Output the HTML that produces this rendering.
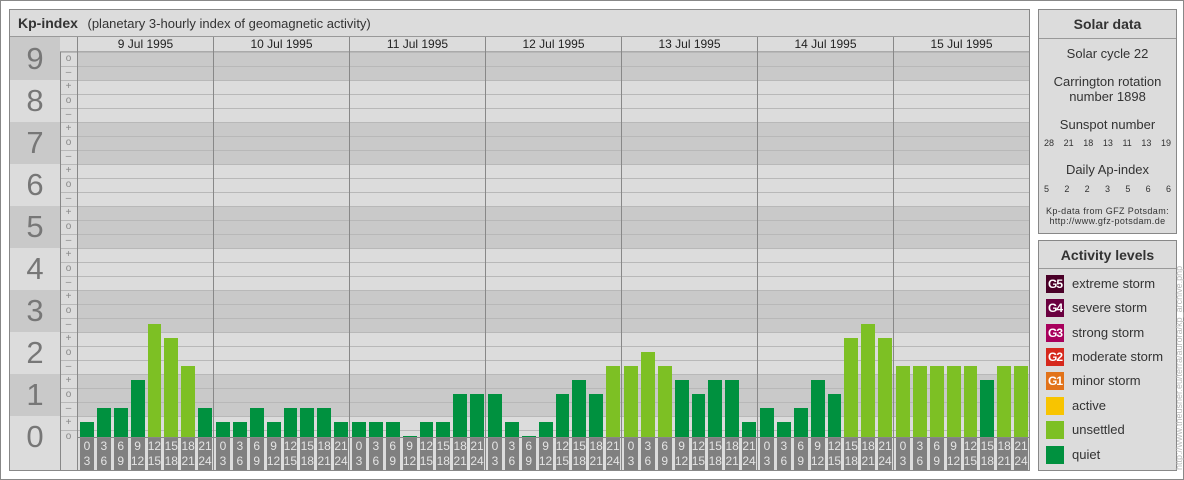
<!DOCTYPE html>
<html><head><meta charset="utf-8"><style>
*{margin:0;padding:0;box-sizing:border-box}
body{width:1184px;height:480px;background:#fff;font-family:"Liberation Sans",sans-serif;position:relative;overflow:hidden}
.abs{position:absolute}
#frame{left:0;top:0;width:1184px;height:480px;border:1px solid #888}
#main{left:9px;top:9px;width:1021px;height:462px;border:1px solid #888;background:#dcdcdc}
#title{left:10px;top:10px;width:1019px;height:27px;border-bottom:1px solid #999;font-size:13px;color:#333;line-height:26px;padding-left:8px}
#title b{font-size:14px;color:#333;margin-right:6px}
.band{position:absolute;background:#c9c9c9}
.kp{position:absolute;left:10px;width:50px;font-size:31px;color:#777;text-align:center}
.tk{position:absolute;left:60px;width:17px;height:14px;font-size:10px;line-height:14px;color:#888;text-align:center}
#grid{left:60px;top:52px;width:969px;height:385px;background:repeating-linear-gradient(to bottom,#b8b8b8 0,#b8b8b8 1px,transparent 1px,transparent 14px)}
.day{position:absolute;top:37px;width:136px;height:433px;border-left:1px solid #888}
.dt{height:15px;font-size:12px;line-height:15px;text-align:center;color:#222}
.bars{position:absolute;left:1px;top:0;height:400px;width:136px;display:flex;align-items:flex-end;padding-left:1px}
.bars i{display:block;width:14px;margin-right:3px;background:#00913f}
.bars i.u{background:#7dc024}
.ax{position:absolute;left:1px;top:401px;width:136px;display:flex;padding-left:1px}
.ax span{display:block;width:14px;height:32px;margin-right:3px;background:#808080;color:#e4e4e4;font-size:12px;line-height:15px;text-align:center;padding-top:1px}
.box{position:absolute;left:1038px;width:139px;border:1px solid #888;background:#dcdcdc}
.hd{height:29px;border-bottom:1px solid #999;font-weight:bold;font-size:14px;color:#333;text-align:center;line-height:29px}
.sd{text-align:center;color:#333;font-size:13px}
.nums{display:flex;justify-content:space-between;padding:0 5px;font-size:9px;color:#333}
.lg{position:absolute;left:7px;height:18px;font-size:13px;color:#333;line-height:18px}
.lg i{position:absolute;left:0;top:0;width:18px;height:18px;font-style:normal;color:#fff;font-size:12px;font-weight:bold;text-align:center;letter-spacing:-1px}
.lg span{position:absolute;left:26px;white-space:nowrap}
</style></head><body>
<div id="frame" class="abs"></div>
<div id="main" class="abs"></div>
<div id="title" class="abs"><b>Kp-index</b> (planetary 3-hourly index of geomagnetic activity)</div>
<div class="band" style="left:10px;top:37px;width:50px;height:43px"></div>
<div class="band" style="left:10px;top:122px;width:50px;height:42px"></div>
<div class="band" style="left:10px;top:206px;width:50px;height:42px"></div>
<div class="band" style="left:10px;top:290px;width:50px;height:42px"></div>
<div class="band" style="left:10px;top:374px;width:50px;height:42px"></div>
<div class="band" style="left:77px;top:52px;width:952px;height:28px"></div>
<div class="band" style="left:77px;top:122px;width:952px;height:42px"></div>
<div class="band" style="left:77px;top:206px;width:952px;height:42px"></div>
<div class="band" style="left:77px;top:290px;width:952px;height:42px"></div>
<div class="band" style="left:77px;top:374px;width:952px;height:42px"></div>
<div id="grid" class="abs"></div>
<div class="abs" style="left:60px;top:37px;width:1px;height:433px;background:#888"></div>
<div class="abs" style="left:77px;top:37px;width:1px;height:433px;background:#888"></div>
<div class="abs" style="left:60px;top:37px;width:969px;height:15px;background:#dcdcdc;border-bottom:1px solid #aaa"></div>
<div class="abs" style="left:77px;top:437px;width:952px;height:1px;background:#888"></div>
<div class="kp" style="top:41px">9</div>
<div class="kp" style="top:83px">8</div>
<div class="kp" style="top:125px">7</div>
<div class="kp" style="top:167px">6</div>
<div class="kp" style="top:209px">5</div>
<div class="kp" style="top:251px">4</div>
<div class="kp" style="top:293px">3</div>
<div class="kp" style="top:335px">2</div>
<div class="kp" style="top:377px">1</div>
<div class="kp" style="top:419px">0</div>
<div class="tk" style="top:52px">o</div><div class="tk" style="top:66px">–</div>
<div class="tk" style="top:80px">+</div><div class="tk" style="top:94px">o</div><div class="tk" style="top:108px">–</div>
<div class="tk" style="top:122px">+</div><div class="tk" style="top:136px">o</div><div class="tk" style="top:150px">–</div>
<div class="tk" style="top:164px">+</div><div class="tk" style="top:178px">o</div><div class="tk" style="top:192px">–</div>
<div class="tk" style="top:206px">+</div><div class="tk" style="top:220px">o</div><div class="tk" style="top:234px">–</div>
<div class="tk" style="top:248px">+</div><div class="tk" style="top:262px">o</div><div class="tk" style="top:276px">–</div>
<div class="tk" style="top:290px">+</div><div class="tk" style="top:304px">o</div><div class="tk" style="top:318px">–</div>
<div class="tk" style="top:332px">+</div><div class="tk" style="top:346px">o</div><div class="tk" style="top:360px">–</div>
<div class="tk" style="top:374px">+</div><div class="tk" style="top:388px">o</div><div class="tk" style="top:402px">–</div>
<div class="tk" style="top:416px">+</div><div class="tk" style="top:430px">o</div>

<div class="day" style="left:77px"><div class="dt">9 Jul 1995</div>
<div class="bars"><i style="height:15px"></i><i style="height:29px"></i><i style="height:29px"></i><i style="height:57px"></i><i class="u" style="height:113px"></i><i class="u" style="height:99px"></i><i class="u" style="height:71px"></i><i style="height:29px"></i></div>
<div class="ax"><span>0<br>3</span><span>3<br>6</span><span>6<br>9</span><span>9<br>12</span><span>12<br>15</span><span>15<br>18</span><span>18<br>21</span><span>21<br>24</span></div></div>

<div class="day" style="left:213px"><div class="dt">10 Jul 1995</div>
<div class="bars"><i style="height:15px"></i><i style="height:15px"></i><i style="height:29px"></i><i style="height:15px"></i><i style="height:29px"></i><i style="height:29px"></i><i style="height:29px"></i><i style="height:15px"></i></div>
<div class="ax"><span>0<br>3</span><span>3<br>6</span><span>6<br>9</span><span>9<br>12</span><span>12<br>15</span><span>15<br>18</span><span>18<br>21</span><span>21<br>24</span></div></div>

<div class="day" style="left:349px"><div class="dt">11 Jul 1995</div>
<div class="bars"><i style="height:15px"></i><i style="height:15px"></i><i style="height:15px"></i><i style="height:1px"></i><i style="height:15px"></i><i style="height:15px"></i><i style="height:43px"></i><i style="height:43px"></i></div>
<div class="ax"><span>0<br>3</span><span>3<br>6</span><span>6<br>9</span><span>9<br>12</span><span>12<br>15</span><span>15<br>18</span><span>18<br>21</span><span>21<br>24</span></div></div>

<div class="day" style="left:485px"><div class="dt">12 Jul 1995</div>
<div class="bars"><i style="height:43px"></i><i style="height:15px"></i><i style="height:1px"></i><i style="height:15px"></i><i style="height:43px"></i><i style="height:57px"></i><i style="height:43px"></i><i class="u" style="height:71px"></i></div>
<div class="ax"><span>0<br>3</span><span>3<br>6</span><span>6<br>9</span><span>9<br>12</span><span>12<br>15</span><span>15<br>18</span><span>18<br>21</span><span>21<br>24</span></div></div>

<div class="day" style="left:621px"><div class="dt">13 Jul 1995</div>
<div class="bars"><i class="u" style="height:71px"></i><i class="u" style="height:85px"></i><i class="u" style="height:71px"></i><i style="height:57px"></i><i style="height:43px"></i><i style="height:57px"></i><i style="height:57px"></i><i style="height:15px"></i></div>
<div class="ax"><span>0<br>3</span><span>3<br>6</span><span>6<br>9</span><span>9<br>12</span><span>12<br>15</span><span>15<br>18</span><span>18<br>21</span><span>21<br>24</span></div></div>

<div class="day" style="left:757px"><div class="dt">14 Jul 1995</div>
<div class="bars"><i style="height:29px"></i><i style="height:15px"></i><i style="height:29px"></i><i style="height:57px"></i><i style="height:43px"></i><i class="u" style="height:99px"></i><i class="u" style="height:113px"></i><i class="u" style="height:99px"></i></div>
<div class="ax"><span>0<br>3</span><span>3<br>6</span><span>6<br>9</span><span>9<br>12</span><span>12<br>15</span><span>15<br>18</span><span>18<br>21</span><span>21<br>24</span></div></div>

<div class="day" style="left:893px"><div class="dt">15 Jul 1995</div>
<div class="bars"><i class="u" style="height:71px"></i><i class="u" style="height:71px"></i><i class="u" style="height:71px"></i><i class="u" style="height:71px"></i><i class="u" style="height:71px"></i><i style="height:57px"></i><i class="u" style="height:71px"></i><i class="u" style="height:71px"></i></div>
<div class="ax"><span>0<br>3</span><span>3<br>6</span><span>6<br>9</span><span>9<br>12</span><span>12<br>15</span><span>15<br>18</span><span>18<br>21</span><span>21<br>24</span></div></div>

<div class="box" style="top:9px;height:225px">
<div class="hd">Solar data</div>
<div class="sd" style="margin-top:7px">Solar cycle 22</div>
<div class="sd" style="margin-top:13px;line-height:15px">Carrington rotation<br>number 1898</div>
<div class="sd" style="margin-top:13px">Sunspot number</div>
<div class="nums" style="margin-top:6px"><span>28</span><span>21</span><span>18</span><span>13</span><span>11</span><span>13</span><span>19</span></div>
<div class="sd" style="margin-top:14px">Daily Ap-index</div>
<div class="nums" style="margin-top:7px"><span>5</span><span>2</span><span>2</span><span>3</span><span>5</span><span>6</span><span>6</span></div>
<div class="sd" style="margin-top:12px;font-size:9px;line-height:10px;letter-spacing:0.4px">Kp-data from GFZ Potsdam:<br>http://www.gfz-potsdam.de</div>
</div>

<div class="box" style="top:240px;height:231px">
<div class="hd" style="height:28px;line-height:28px">Activity levels</div>
<div class="lg" style="top:34px"><i style="background:#4a0028">G5</i><span>extreme storm</span></div>
<div class="lg" style="top:58px"><i style="background:#6a0040">G4</i><span>severe storm</span></div>
<div class="lg" style="top:83px"><i style="background:#a8005c">G3</i><span>strong storm</span></div>
<div class="lg" style="top:107px"><i style="background:#d6281c">G2</i><span>moderate storm</span></div>
<div class="lg" style="top:131px"><i style="background:#e2731a">G1</i><span>minor storm</span></div>
<div class="lg" style="top:156px"><i style="background:#f8c400"></i><span>active</span></div>
<div class="lg" style="top:180px"><i style="background:#7dc024"></i><span>unsettled</span></div>
<div class="lg" style="top:205px"><i style="background:#00913f"></i><span>quiet</span></div>
</div>
<div class="abs" style="left:1174px;top:470px;width:230px;height:10px;transform:rotate(-90deg);transform-origin:0 0;font-size:9px;color:#bbb;white-space:nowrap;line-height:10px">http://www.theusner.eu/terra/aurora/kp_archive.php</div>
</body></html>
